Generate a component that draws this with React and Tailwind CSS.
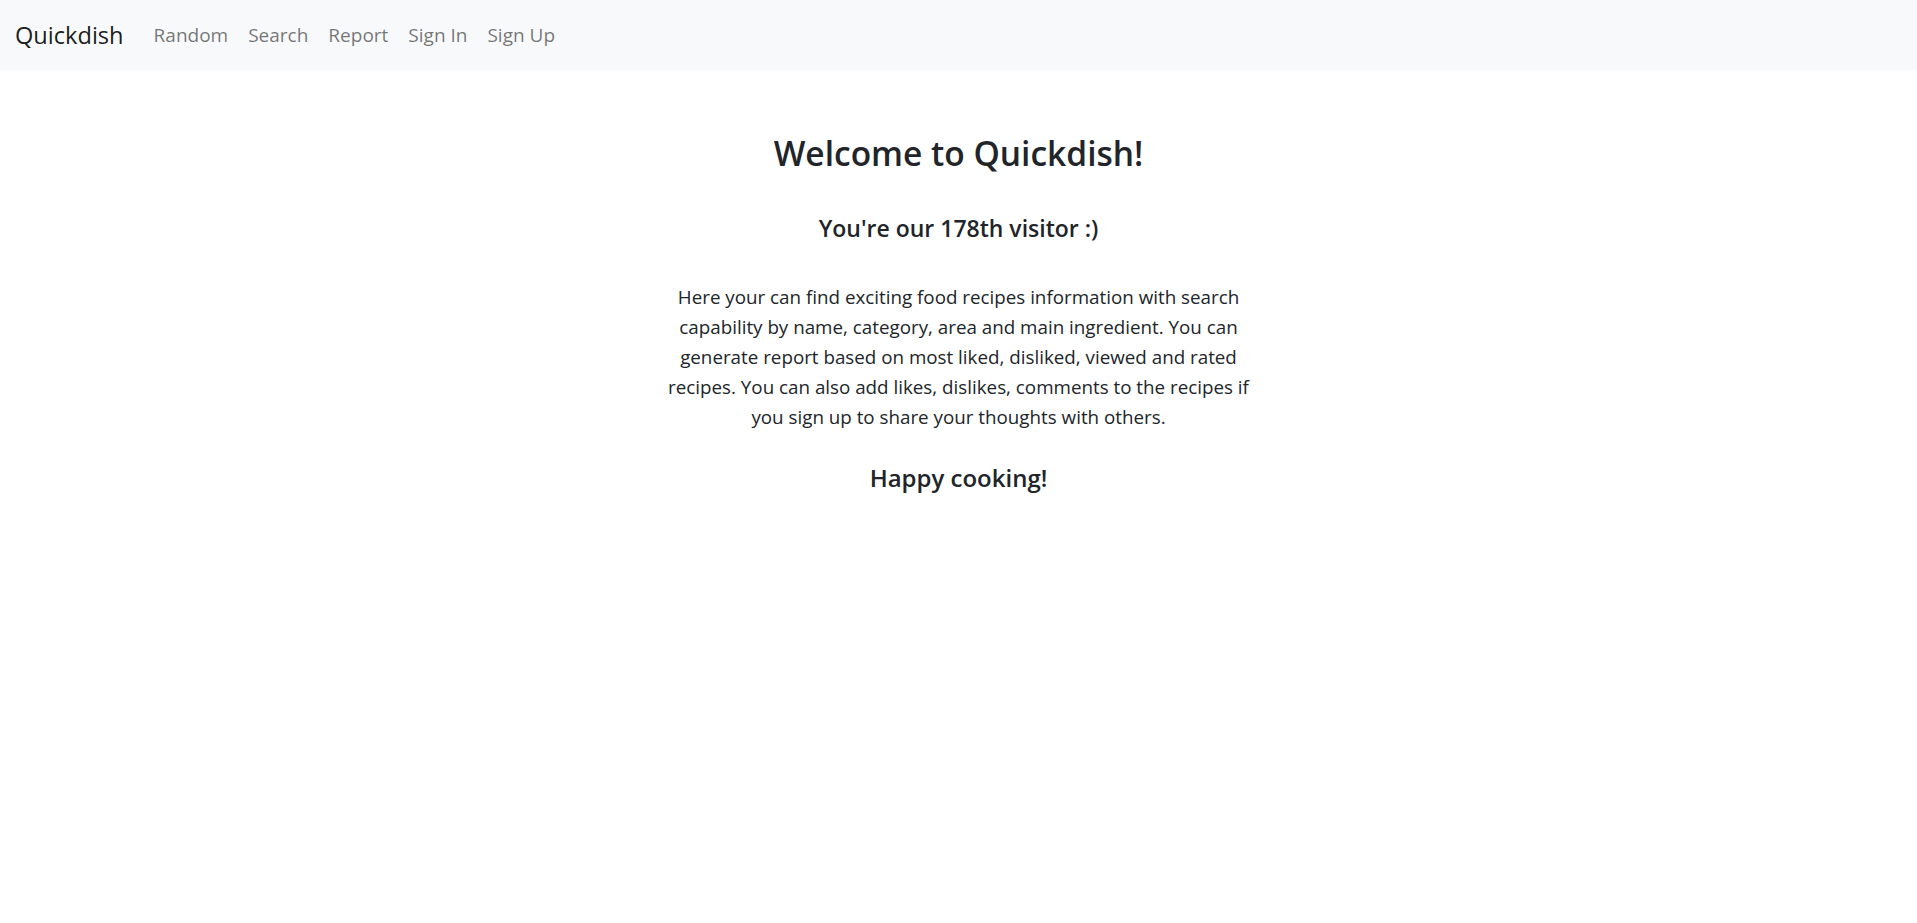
import React from 'react'

const links = ['Random', 'Search', 'Report', 'Sign In', 'Sign Up']

export default function App() {
  return (
    <div className="min-h-screen bg-white text-[#212529] font-['Open_Sans','Noto_Sans',sans-serif]">
      {/* navbar */}
      <nav className="h-[70px] bg-[#f8f9fa] flex items-center pl-[15px]">
        <a className="text-[23.6px] leading-[30px] text-black/90 mr-[20px]">Quickdish</a>
        <ul className="flex items-center">
          {links.map((l) => (
            <li key={l}>
              <a className="block px-[10px] text-[19px] leading-[30px] text-black/55">{l}</a>
            </li>
          ))}
        </ul>
      </nav>

      {/* welcome */}
      <main className="flex flex-col items-center text-center pt-[62px]">
        <h1 className="text-[33.5px] leading-[42px] font-semibold">Welcome to Quickdish!</h1>
        <h5 className="mt-[39px] text-[23px] leading-[30px] font-semibold">You're our 178th visitor :)</h5>
        <p className="mt-[39px] w-[605px] text-[18.8px] leading-[30px]">
          Here your can find exciting food recipes information with search capability by name, category, area and main ingredient. You can generate report based on most liked, disliked, viewed and rated recipes. You can also add likes, dislikes, comments to the recipes if you sign up to share your thoughts with others.
        </p>
        <h5 className="mt-[31px] text-[24px] leading-[30px] font-semibold">Happy cooking!</h5>
      </main>
    </div>
  )
}
